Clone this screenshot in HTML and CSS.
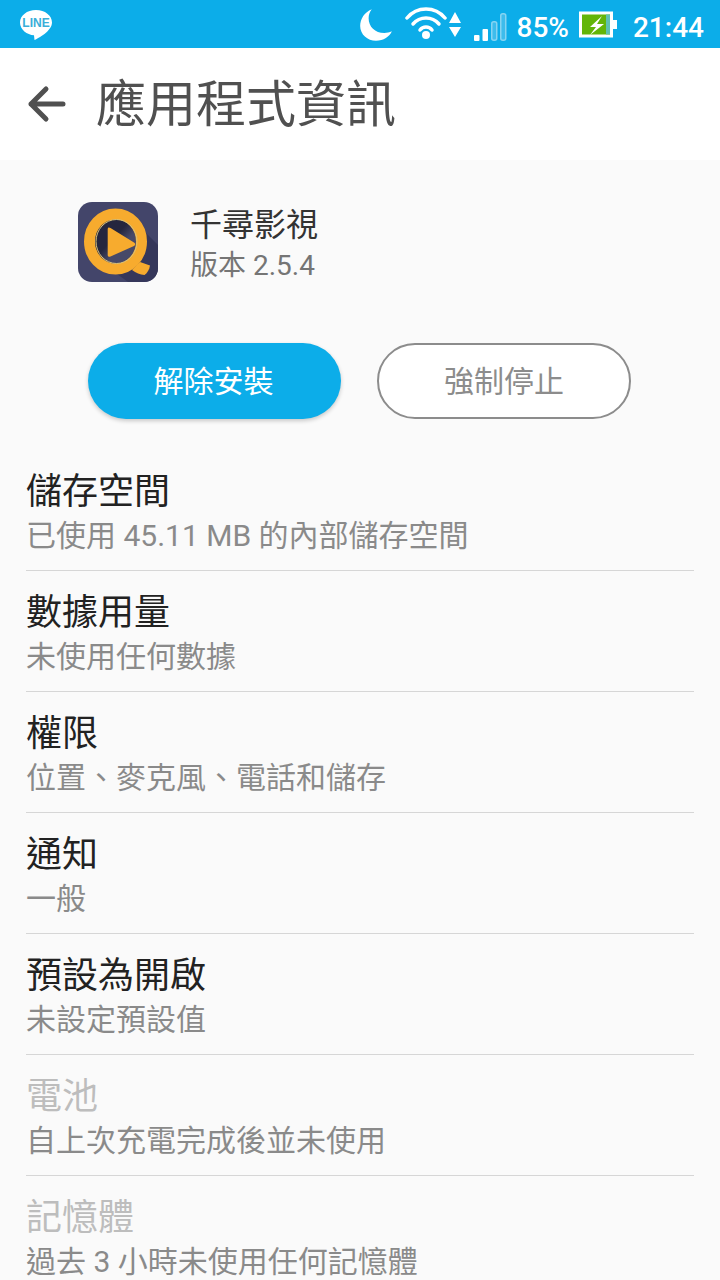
FILE: index.html
```html
<!DOCTYPE html>
<html lang="zh-TW">
<head>
  <meta charset="UTF-8">
  <title>應用程式資訊</title>
  <link rel="stylesheet" href="styles.css">
</head>
<body>
  <div class="status-bar">
    <svg class="line-icon" width="34" height="32" viewBox="0 0 34 32">
      <path d="M17 1C8 1 1 6.5 1 13.5S8 26 15 26.2L15.5 31C19 29.5 33 22 33 13.5 33 6.5 26 1 17 1Z" fill="#fff"/>
      <text x="17" y="17.500" text-anchor="middle" class="line-text">LINE</text>
    </svg>
    <div class="status-right">
      <svg class="moon" width="38" height="38" viewBox="0 0 36 36">
        <path d="M14 3C7 6 3 12 3 19c0 8 7 14 15 14 7 0 13-4 15-9-2 1-5 1.5-7 1.5-9 0-15-6-15-14 0-3 1-6 3-8.500Z" fill="#fff"/>
      </svg>
      <svg class="wifi" width="58" height="36" viewBox="0 0 58 36">
        <g fill="none" stroke="#fff" stroke-width="3.500" stroke-linecap="round">
          <path d="M2 12C12 0 30 0 40 12"/>
          <path d="M8 18C15 10 27 10 34 18"/>
          <path d="M15 24C18 20 24 20 27 24"/>
        </g>
        <circle cx="21" cy="29" r="4" fill="#fff"/>
        <path d="M50 6L56 17H44ZM44 21H56L50 31Z" fill="#fff"/>
      </svg>
      <svg class="signal" width="34" height="36" viewBox="0 0 34 36">
        <rect x="1" y="29" width="5.500" height="6" rx="1" fill="#fff"/>
        <rect x="9.500" y="23" width="5.500" height="12" rx="1" fill="#fff"/>
        <rect x="18.750" y="15.750" width="5" height="18.500" rx="2" fill="#3dbcec" stroke="#86d4f2" stroke-width="1.500"/>
        <rect x="27.750" y="7.750" width="5" height="26.500" rx="2" fill="#3dbcec" stroke="#86d4f2" stroke-width="1.500"/>
      </svg>
      <span class="battery-pct">85%</span>
      <svg width="38" height="28" viewBox="0 0 38 28">
        <rect x="1.500" y="3" width="31" height="23" fill="#63b508" stroke="#fff" stroke-width="3"/>
        <rect x="27" y="4.500" width="4" height="20" fill="#5fc0b0"/>
        <rect x="33" y="10" width="5" height="9" fill="#fff"/>
        <path d="M23 6L11 17H17L11 25L25 14H18Z" fill="#fff"/>
      </svg>
      <span class="clock">21:44</span>
    </div>
  </div>

  <header class="app-bar">
    <svg class="back" width="40" height="40" viewBox="0 0 40 40">
      <path d="M36 20H4M19 5L4 20L19 35" fill="none" stroke="#505050" stroke-width="5" stroke-linecap="round" stroke-linejoin="round"/>
    </svg>
    <h1>應用程式資訊</h1>
  </header>

  <main>
    <section class="app-info">
      <svg class="app-icon" width="80" height="80" viewBox="0 0 80 80">
        <defs>
          <linearGradient id="hole" x1="0" y1="0" x2="1" y2="1">
            <stop offset="0.45" stop-color="#25263e"/>
            <stop offset="0.6" stop-color="#474968"/>
          </linearGradient>
        </defs>
        <rect width="80" height="80" rx="14" fill="#43456a"/>
        <path d="M55 18L80 43V66C80 74 74 80 66 80H50L20 58Z" fill="#35375a"/>
        <ellipse cx="37.500" cy="39.500" rx="26" ry="27.500" fill="url(#hole)" stroke="#f7ab2e" stroke-width="11"/>
        <ellipse cx="38.500" cy="39.500" rx="20.500" ry="22" fill="none" stroke="#d9c27a" stroke-width="1"/>
        <path d="M54 68L62 60L72 63.500C71.500 67 69.500 71 66.500 73C62 72.500 58 71 54 68Z" fill="#f7ab2e"/>
        <path d="M29.700 27C29.700 25.500 31 25 32.500 26L56 40.500C57.500 41.500 57.500 43 56 44L32.500 54.500C31 55.200 29.700 54.500 29.700 53Z" fill="#f7ab2e"/>
      </svg>
      <div class="app-text">
        <div class="app-name">千尋影視</div>
        <div class="app-version">版本 2.5.4</div>
      </div>
    </section>

    <div class="actions">
      <button class="btn btn-primary">解除安裝</button>
      <button class="btn btn-outline">強制停止</button>
    </div>

    <ul class="rows">
      <li><div class="row-title">儲存空間</div><div class="row-sub">已使用 45.11 MB 的內部儲存空間</div></li>
      <li><div class="row-title">數據用量</div><div class="row-sub">未使用任何數據</div></li>
      <li><div class="row-title">權限</div><div class="row-sub">位置、麥克風、電話和儲存</div></li>
      <li><div class="row-title">通知</div><div class="row-sub">一般</div></li>
      <li><div class="row-title">預設為開啟</div><div class="row-sub">未設定預設值</div></li>
      <li class="disabled"><div class="row-title">電池</div><div class="row-sub">自上次充電完成後並未使用</div></li>
      <li class="disabled"><div class="row-title">記憶體</div><div class="row-sub">過去 3 小時未使用任何記憶體</div></li>
    </ul>
  </main>
</body>
</html>
```

FILE: styles.css
```css
html, body {
  margin: 0;
  padding: 0;
  height: 1280px;
  overflow: hidden;
}

body {
  font-family: Roboto, "Noto Sans CJK TC", sans-serif;
  background-color: #fafafa;
}

.status-bar {
  height: 48px;
  background-color: #0cade9;
  display: flex;
  align-items: center;
  justify-content: space-between;
  padding: 0 16px 0 19px;
  color: #fff;
}

.line-icon {
  margin-top: 2px;
}

.line-text {
  font-family: "Liberation Sans", sans-serif;
  font-size: 12px;
  font-weight: bold;
  fill: #3aaed8;
}

.status-right {
  display: flex;
  align-items: center;
}

.moon {
  margin-top: 2px;
}

.wifi {
  margin-left: 10px;
}

.signal {
  margin-left: 10px;
}

.battery-pct {
  font-size: 28px;
  font-weight: 500;
  padding-top: 6px;
  margin: 0 10px;
}

.clock {
  font-size: 28px;
  font-weight: 500;
  padding-top: 6px;
  margin-left: 16px;
}

.app-bar {
  height: 112px;
  background-color: #fff;
  display: flex;
  align-items: center;
  padding-left: 27px;
}

.back {
  margin-right: 29px;
}

.app-bar h1 {
  margin: 0;
  padding-bottom: 8px;
  font-size: 50px;
  font-weight: 400;
  color: #505050;
}

.app-info {
  display: flex;
  align-items: center;
  padding: 42px 0 0 78px;
}

.app-icon {
  flex: none;
  margin-top: -3px;
}

.app-text {
  margin-left: 32px;
  padding-top: 1px;
}

.app-name {
  font-size: 32px;
  line-height: 44px;
  color: #333;
}

.app-version {
  font-size: 28px;
  line-height: 38px;
  color: #757575;
}

.actions {
  display: flex;
  gap: 36px;
  padding: 58px 0 0 88px;
}

.btn {
  width: 253px;
  height: 76px;
  border-radius: 38px;
  font-family: inherit;
  font-size: 30px;
  padding: 0 0 5px;
}

.btn-primary {
  border: none;
  padding-right: 2px;
  background-color: #0cade9;
  color: #fff;
  box-shadow: 0 2px 4px rgba(0, 0, 0, 0.2);
}

.btn-outline {
  width: 254px;
  border: 2px solid #8c8c8c;
  background-color: #fff;
  color: #8c8c8c;
}

.rows {
  list-style: none;
  margin: 31px 26px 0;
  padding: 0;
}

.rows li {
  height: 120px;
  border-bottom: 1px solid #d6d6d6;
}

.rows li:last-child {
  border-bottom: none;
}

.row-title {
  font-size: 36px;
  line-height: 47px;
  padding-top: 19px;
  color: #222;
}

.row-sub {
  font-size: 30px;
  line-height: 40px;
  color: #8a8a8a;
}

.disabled .row-title {
  color: #bdbdbd;
}
```
